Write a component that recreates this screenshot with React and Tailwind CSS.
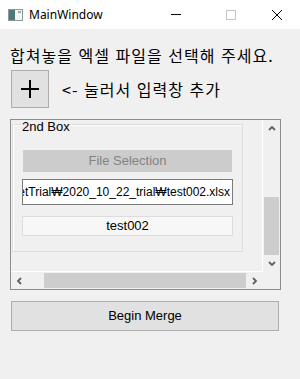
import React from "react";

const KR = { fontFamily: '"Noto Sans CJK KR", "Noto Sans", sans-serif' };
const UI = { fontFamily: '"Liberation Sans", "Noto Sans CJK KR", sans-serif' };

const Chevron = ({ dir }) => {
  const pts = {
    up: "1,5 4,2 7,5",
    down: "1,2 4,5 7,2",
    left: "5,1 2,4 5,7",
    right: "2,1 5,4 2,7",
  }[dir];
  return (
    <svg width="8" height="8" viewBox="0 0 8 8">
      <polyline points={pts} fill="none" stroke="#606060" strokeWidth="1.8" />
    </svg>
  );
};

const TitleBar = () => (
  <div className="flex h-[29px] items-center bg-white">
    <svg className="ml-[8px]" width="15" height="12" viewBox="0 0 15 12">
      <rect x="0.5" y="0.5" width="14" height="11" fill="#f4f4f4" stroke="#8a9a9a" />
      <rect x="1" y="1" width="6" height="10" fill="#4f7a74" />
      <rect x="10" y="2" width="3" height="2" fill="#9aa" />
    </svg>
    <span className="ml-[6px] text-[12px] text-black" style={{ fontFamily: '"Noto Sans", "Open Sans", sans-serif' }}>
      MainWindow
    </span>
    <div className="flex-1" />
    <div className="mr-[10px] h-px w-[10px] bg-black" />
    <div className="ml-[35px] h-[10px] w-[10px] border border-[#c4c4c4]" />
    <svg className="ml-[36px] mr-[18px]" width="10" height="10" viewBox="0 0 10 10">
      <path d="M0 0 L10 10 M10 0 L0 10" stroke="#000" strokeWidth="1" />
    </svg>
  </div>
);

const VScrollBar = () => (
  <div className="flex w-[17px] flex-col bg-[#f0f0f0]">
    <div className="flex h-[17px] items-center justify-center">
      <Chevron dir="up" />
    </div>
    <div className="flex flex-1 flex-col px-px">
      <div className="h-[60px]" />
      <div className="h-[58px] bg-[#cdcdcd]" />
    </div>
    <div className="flex h-[17px] items-center justify-center">
      <Chevron dir="down" />
    </div>
  </div>
);

const HScrollBar = () => (
  <div className="flex h-[17px] w-[252px] bg-[#f0f0f0]">
    <div className="flex w-[17px] items-center justify-center">
      <Chevron dir="left" />
    </div>
    <div className="flex flex-1 py-px">
      <div className="w-[16px]" />
      <div className="flex-1 bg-[#cdcdcd]" />
    </div>
    <div className="flex w-[17px] items-center justify-center">
      <Chevron dir="right" />
    </div>
  </div>
);

const GroupBox = () => (
  <div className="relative h-[128px] w-[231px] border border-[#dcdcdc] px-[9px] pt-[25px] shadow-[inset_1px_1px_0_#ffffff]" style={UI}>
    <span className="absolute -top-[5px] left-[8px] bg-[#f0f0f0] px-px text-[13px] leading-[14px] text-black">
      2nd Box
    </span>
    <div className="ml-px flex h-[22px] w-[209px] items-center justify-center bg-[#cccccc] text-[13px] text-[#838383]">
      File Selection
    </div>
    <div className="mt-[7px] flex h-[26px] w-[211px] items-center justify-end overflow-hidden whitespace-nowrap border border-[#7a7a7a] bg-white pr-[2px] text-[12px] text-black">
      C:₩Users₩user₩Desktop₩SheetTrial₩2020_10_22_trial₩test002.xlsx
    </div>
    <div className="mt-[11px] flex h-[20px] w-[211px] items-center justify-center border border-[#dcdcdc] bg-[#f7f7f7] text-[13px] text-black">
      test002
    </div>
  </div>
);

const ScrollArea = () => (
  <div className="mt-[11px] flex h-[171px] w-[271px] flex-col border border-[#8c8c8c]">
    <div className="flex h-[152px]">
      <div className="h-[152px] w-[252px] overflow-hidden border-b border-r border-white pl-px pt-[4px]">
        <GroupBox />
      </div>
      <VScrollBar />
    </div>
    <div className="flex">
      <HScrollBar />
      <div className="h-[17px] w-[17px] bg-[#f0f0f0]" />
    </div>
  </div>
);

export default function App() {
  return (
    <div className="flex h-[379px] w-[300px] flex-col overflow-hidden bg-[#f0f0f0]">
      <TitleBar />
      <div className="flex flex-col px-[10px]">
        <p className="mt-[14px] whitespace-nowrap text-[16px] leading-[24px] tracking-[1px] text-black [word-spacing:1px]" style={KR}>
          합쳐놓을 엑셀 파일을 선택해 주세요.
        </p>
        <div className="mt-[3px] flex items-center">
          <button className="ml-px flex h-[38px] w-[38px] items-center justify-center border border-[#adadad] bg-[#e1e1e1]">
            <svg width="18" height="18" viewBox="0 0 18 18">
              <path d="M0 9 H18 M9 0 V18" stroke="#000" strokeWidth="2" />
            </svg>
          </button>
          <span className="ml-[13px] whitespace-nowrap text-[16px] leading-[24px] tracking-[1px] text-black [word-spacing:1px]" style={KR}>
            &lt;- 눌러서 입력창 추가
          </span>
        </div>
        <ScrollArea />
        <button
          className="ml-px mt-[11px] flex h-[30px] w-[268px] items-center justify-center border border-[#adadad] bg-[#e1e1e1] text-[13px] text-black"
          style={UI}
        >
          Begin Merge
        </button>
      </div>
    </div>
  );
}
